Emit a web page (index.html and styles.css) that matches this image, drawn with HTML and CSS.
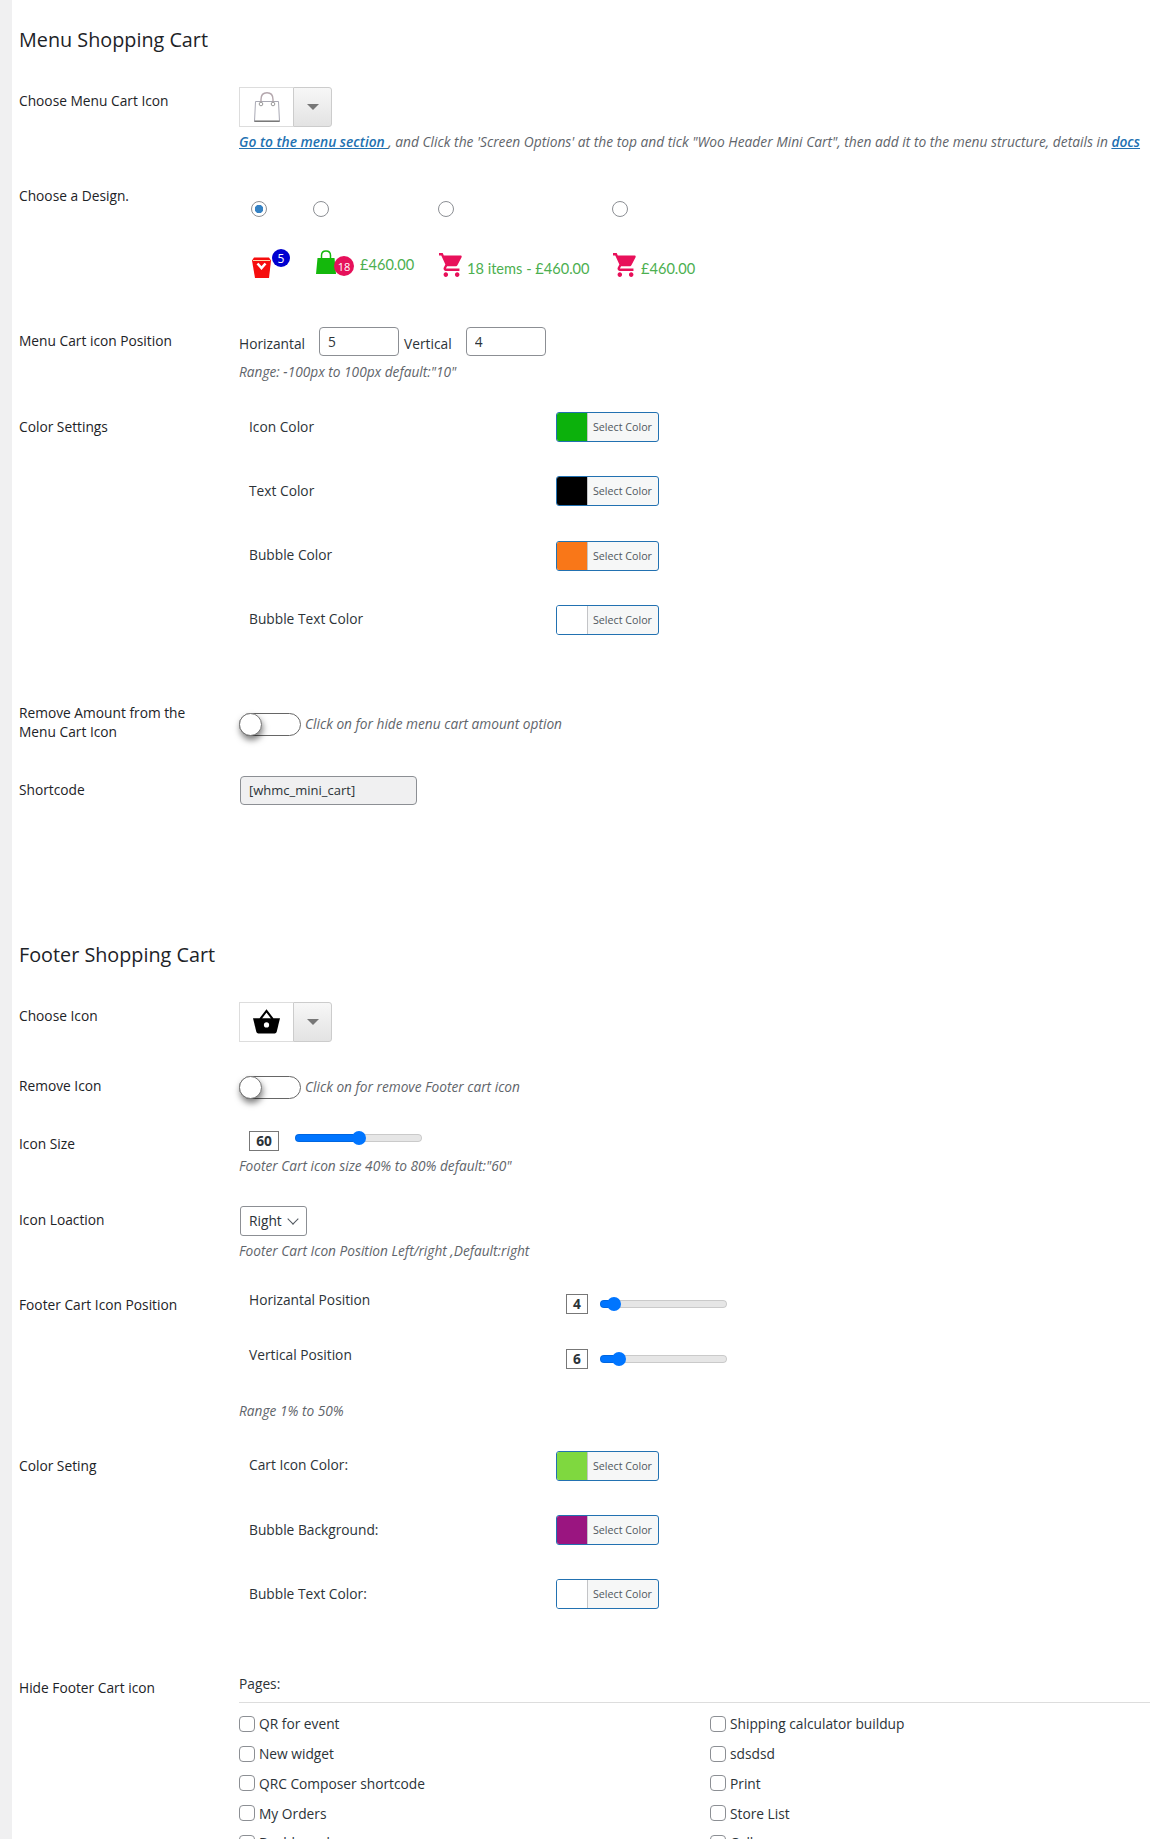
FILE: index.html
```html
<!DOCTYPE html>
<html lang="en">
<head>
  <meta charset="UTF-8">
  <meta name="viewport" content="width=device-width, initial-scale=1.0">
  <title>Mini Cart Settings</title>
  <link rel="stylesheet" href="styles.css">
</head>
<body>
<main class="settings">

  <!-- Menu cart -->
  <h2 class="section-title">Menu Shopping Cart</h2>

  <div class="row row-picker">
    <div class="label pad-4">Choose Menu Cart Icon</div>
    <div>
      <div class="picker">
        <span class="picker-icon">
          <svg width="26" height="30" viewBox="0 0 26 30">
            <path d="M1.5 9.5h23l1 20H.5z" fill="#fff" stroke="#a9a9b4"/>
            <path d="M.5 29.2h25" stroke="#777" stroke-width="1.5"/>
            <path d="M7 12V7.5C7 3.2 9.5 .8 13 .8s6 2.4 6 6.7V12" fill="none" stroke="#b4a7ad" stroke-width="1.4"/>
            <circle cx="7" cy="12" r="1.8" fill="#fff" stroke="#999"/>
            <circle cx="19" cy="12" r="1.8" fill="#fff" stroke="#999"/>
          </svg>
        </span>
        <button class="picker-btn" type="button"><span class="caret"></span></button>
      </div>
      <p class="note note-link"><a href="#">Go to the menu section </a>, and Click the 'Screen Options' at the top and tick "Woo Header Mini Cart", then add it to the menu structure, details in <a href="#">docs</a></p>
    </div>
  </div>

  <div class="row row-design">
    <div class="label">Choose a Design.</div>
    <div class="designs">
      <label class="design design-1">
        <input type="radio" name="design" checked>
        <span class="preview">
          <svg width="20" height="22" viewBox="0 0 20 22">
            <path d="M0 4.5 2 1.5h15l2 3-2 17.5H3z" fill="#f60d0d"/>
            <path d="M1 4.5h17" stroke="#ffd6a8" stroke-width="1"/>
            <path d="M5.5 7.5 9.5 12l4-4.500" fill="none" stroke="#fff" stroke-width="2.6"/>
          </svg>
          <span class="bubble bubble-blue">5</span>
        </span>
      </label>
      <label class="design design-2">
        <input type="radio" name="design">
        <span class="preview preview-bag">
          <svg width="20" height="24" viewBox="0 0 20 24">
            <path d="M1.500 8h17l1.500 16H0z" fill="#14b80c"/>
            <path d="M5.500 10V5.500C5.500 2.500 7.500 1 10 1s4.500 1.500 4.500 4.500V10" fill="none" stroke="#14b80c" stroke-width="1.500"/>
          </svg>
          <span class="bubble bubble-pink">18</span>
          <span class="price">£460.00</span>
        </span>
      </label>
      <label class="design design-3">
        <input type="radio" name="design">
        <span class="preview preview-cart">
          <svg width="25" height="24" viewBox="1 2 22 20" preserveAspectRatio="none"><path fill="#e8105a" d="M7 18c-1.100 0-1.990.9-1.990 2S5.900 22 7 22s2-.9 2-2-.9-2-2-2zM1 2v2h2l3.600 7.590-1.350 2.450c-.16.28-.25.61-.25.96 0 1.100.9 2 2 2h12v-2H7.420c-.14 0-.25-.11-.25-.25l.03-.12.9-1.630h7.450c.75 0 1.410-.41 1.750-1.030l3.580-6.490c.08-.14.12-.31.12-.48 0-.55-.45-1-1-1H5.210l-.94-2H1zm16 16c-1.100 0-1.990.9-1.990 2s.89 2 1.990 2 2-.9 2-2-.9-2-2-2z"/></svg>
          <span class="price">18 items - £460.00</span>
        </span>
      </label>
      <label class="design">
        <input type="radio" name="design">
        <span class="preview preview-cart">
          <svg width="25" height="24" viewBox="1 2 22 20" preserveAspectRatio="none"><path fill="#e8105a" d="M7 18c-1.100 0-1.990.9-1.990 2S5.900 22 7 22s2-.9 2-2-.9-2-2-2zM1 2v2h2l3.600 7.590-1.350 2.450c-.16.28-.25.61-.25.96 0 1.100.9 2 2 2h12v-2H7.420c-.14 0-.25-.11-.25-.25l.03-.12.9-1.630h7.450c.75 0 1.410-.41 1.750-1.030l3.580-6.490c.08-.14.12-.31.12-.48 0-.55-.45-1-1-1H5.210l-.94-2H1zm16 16c-1.100 0-1.990.9-1.990 2s.89 2 1.990 2 2-.9 2-2-.9-2-2-2z"/></svg>
          <span class="price">£460.00</span>
        </span>
      </label>
    </div>
  </div>

  <div class="row row-position">
    <div class="label pad-4">Menu Cart icon Position</div>
    <div>
      <div class="position-fields">
        <label class="field-text" for="posH">Horizantal</label>
        <input class="text-input" id="posH" type="text" value="5">
        <label class="field-text" for="posV">Vertical</label>
        <input class="text-input" id="posV" type="text" value="4">
      </div>
      <p class="note">Range: -100px to 100px default:"10"</p>
    </div>
  </div>

  <div class="row row-colors">
    <div class="label pad-5">Color Settings</div>
    <div class="color-list">
      <div class="color-row"><span>Icon Color</span><button class="color-btn" type="button"><span class="swatch swatch-green"></span><span class="color-text">Select Color</span></button></div>
      <div class="color-row"><span>Text Color</span><button class="color-btn" type="button"><span class="swatch swatch-black"></span><span class="color-text">Select Color</span></button></div>
      <div class="color-row"><span>Bubble Color</span><button class="color-btn" type="button"><span class="swatch swatch-orange"></span><span class="color-text">Select Color</span></button></div>
      <div class="color-row"><span>Bubble Text Color</span><button class="color-btn" type="button"><span class="swatch"></span><span class="color-text">Select Color</span></button></div>
    </div>
  </div>

  <div class="row row-amount">
    <div class="label">Remove Amount from the Menu Cart Icon</div>
    <div class="toggle-line toggle-offset">
      <span class="toggle"></span>
      <span class="note-inline">Click on for hide menu cart amount option</span>
    </div>
  </div>

  <div class="row row-shortcode">
    <div class="label pad-4">Shortcode</div>
    <div><input class="shortcode" type="text" value="[whmc_mini_cart]" readonly></div>
  </div>

  <!-- Footer cart -->
  <h2 class="section-title footer-title">Footer Shopping Cart</h2>

  <div class="row row-footer-icon">
    <div class="label pad-4">Choose Icon</div>
    <div>
      <div class="picker">
        <span class="picker-icon">
          <svg width="27" height="25" viewBox="0 0 28 25">
            <path d="M7.500 10 14 1.500 20.500 10" fill="none" stroke="#000" stroke-width="2.200"/>
            <path d="M0 9h28l-3.500 14.500q-.4 1.500-2 1.500h-17q-1.600 0-2-1.500z"/>
            <circle cx="14" cy="16" r="2.700" fill="#fff"/>
          </svg>
        </span>
        <button class="picker-btn" type="button"><span class="caret"></span></button>
      </div>
    </div>
  </div>

  <div class="row row-remove">
    <div class="label">Remove Icon</div>
    <div class="toggle-line">
      <span class="toggle"></span>
      <span class="note-inline">Click on for remove Footer cart icon</span>
    </div>
  </div>

  <div class="row row-size">
    <div class="label pad-3">Icon Size</div>
    <div>
      <div class="slider-line size-line">
        <span class="value-box value-wide">60</span>
        <input class="slider" type="range" min="40" max="80" value="60" style="--fill: 63px">
      </div>
      <p class="note note-5">Footer Cart icon size 40% to 80% default:"60"</p>
    </div>
  </div>

  <div class="row row-location">
    <div class="label pad-4">Icon Loaction</div>
    <div>
      <span class="select-wrap">
        <select class="select">
          <option>Right</option>
          <option>Left</option>
        </select>
      </span>
      <p class="note note-5">Footer Cart Icon Position Left/right ,Default:right</p>
    </div>
  </div>

  <div class="row row-footer-pos">
    <div class="label pad-5">Footer Cart Icon Position</div>
    <div>
      <div class="pos-row">
        <span>Horizantal Position</span>
        <div class="slider-line">
          <span class="value-box">4</span>
          <input class="slider" type="range" min="1" max="50" value="4" style="--fill: 14px">
        </div>
      </div>
      <div class="pos-row">
        <span>Vertical Position</span>
        <div class="slider-line">
          <span class="value-box">6</span>
          <input class="slider" type="range" min="1" max="50" value="6" style="--fill: 18px">
        </div>
      </div>
      <p class="note note-tight">Range 1% to 50%</p>
    </div>
  </div>

  <div class="row row-colors">
    <div class="label pad-5">Color Seting</div>
    <div class="color-list">
      <div class="color-row"><span>Cart Icon Color:</span><button class="color-btn" type="button"><span class="swatch swatch-lime"></span><span class="color-text">Select Color</span></button></div>
      <div class="color-row"><span>Bubble Background:</span><button class="color-btn" type="button"><span class="swatch swatch-purple"></span><span class="color-text">Select Color</span></button></div>
      <div class="color-row"><span>Bubble Text Color:</span><button class="color-btn" type="button"><span class="swatch"></span><span class="color-text">Select Color</span></button></div>
    </div>
  </div>

  <div class="row row-hide">
    <div class="label pad-4">Hide Footer Cart icon</div>
    <div>
      <div class="pages-title">Pages:</div>
      <div class="pages">
        <label class="check"><input type="checkbox">QR for event</label>
        <label class="check"><input type="checkbox">Shipping calculator buildup</label>
        <label class="check"><input type="checkbox">New widget</label>
        <label class="check"><input type="checkbox">sdsdsd</label>
        <label class="check"><input type="checkbox">QRC Composer shortcode</label>
        <label class="check"><input type="checkbox">Print</label>
        <label class="check"><input type="checkbox">My Orders</label>
        <label class="check"><input type="checkbox">Store List</label>
        <label class="check"><input type="checkbox">Dashboard</label>
        <label class="check"><input type="checkbox">Cell</label>
      </div>
    </div>
  </div>

</main>
</body>
</html>
```
FILE: styles.css
```css
html, body {
  margin: 0;
  height: 1839px;
  overflow: hidden;
}

body {
  background-color: #f0f0f1;
  color: #2c3338;
  font-family: "Open Sans", "Noto Sans", Arial, sans-serif;
  font-size: 13.75px;
  line-height: 19px;
}

.settings {
  margin-left: 12px;
  padding: 27px 0 0 7px;
  height: 1839px;
  box-sizing: border-box;
  background-color: #fff;
  overflow: hidden;
}

.section-title {
  margin: 0 0 34px;
  font-size: 19.8px;
  line-height: 26px;
  font-weight: 500;
  color: #1d2327;
}

.footer-title {
  margin-top: 137px;
  margin-bottom: 34px;
}

.row {
  display: grid;
  grid-template-columns: 220px 1fr;
}

.label {
  color: #1d2327;
  width: 175px;
}

.pad-3 { padding-top: 3px; }
.pad-4 { padding-top: 4px; }
.pad-5 { padding-top: 5px; }

.row-design { margin-top: 35px; }
.row-position { margin-top: 49px; }
.row-colors { margin-top: 31px; }
.row-amount { margin-top: 68px; }
.row-shortcode { margin-top: 35px; }
.row-remove { margin-top: 34px; }
.row-size { margin-top: 32px; }
.row-location { margin-top: 31px; }
.row-footer-pos { margin-top: 30px; }
.row-hide { margin-top: 65px; }

/* icon picker */
.picker {
  display: flex;
  width: 93px;
  height: 40px;
}

.picker-icon {
  display: flex;
  align-items: center;
  justify-content: center;
  width: 54px;
  box-sizing: border-box;
  border: 1px solid #ddd;
  border-right: none;
  background-color: #fff;
}

.picker-btn {
  display: flex;
  align-items: center;
  justify-content: center;
  width: 39px;
  padding: 0;
  border: 1px solid #ccc;
  border-radius: 0 3px 3px 0;
  background: linear-gradient(#f7f7f7, #e3e3e3);
}

.caret {
  width: 0;
  height: 0;
  border-left: 6px solid transparent;
  border-right: 6px solid transparent;
  border-top: 6px solid #777;
}

.note {
  margin: 6px 0 0;
  color: #5f656b;
  font-size: 13.7px;
  font-style: italic;
}

.note-link {
  margin-top: 5px;
  font-size: 13.77px;
}

.note-5 { margin-top: 5px; }
.note-tight { margin-top: 1px; }

.note a {
  color: #2271b1;
  font-weight: 600;
}

.note-inline {
  padding-bottom: 1px;
  color: #5f656b;
  font-size: 13.7px;
  font-style: italic;
}

/* designs */
.designs {
  display: flex;
  padding: 15px 0 0 12px;
}

.design {
  display: block;
}

.design-1 { width: 62px; }
.design-2 { width: 125px; }
.design-3 { width: 174px; }

input[type="radio"] {
  display: block;
  appearance: none;
  width: 16px;
  height: 16px;
  margin: 0;
  border: 1px solid #8c8f94;
  border-radius: 50%;
  background-color: #fff;
}

input[type="radio"]:checked {
  background: radial-gradient(circle, #3582c4 0 4px, #fff 4.500px);
}

.preview {
  position: relative;
  display: flex;
  height: 28px;
  margin-top: 33px;
  padding-left: 1px;
}

.preview svg {
  display: block;
  align-self: flex-end;
}

.preview-bag {
  padding-left: 3px;
  gap: 24px;
}

.preview-bag svg {
  align-self: flex-start;
}

.preview-cart {
  gap: 3px;
}

.preview-cart svg {
  align-self: flex-start;
  margin-top: 3px;
}

.bubble {
  position: absolute;
  display: flex;
  align-items: center;
  justify-content: center;
  border-radius: 50%;
  color: #fff;
}

.bubble-blue {
  left: 21px;
  top: -1px;
  width: 18px;
  height: 18px;
  font-size: 12px;
  background-color: #0000d0;
}

.bubble-pink {
  left: 21px;
  top: 6px;
  width: 20px;
  height: 20px;
  font-size: 11px;
  background-color: #e6105a;
}

.price {
  font-family: Lato, "Open Sans", sans-serif;
  font-size: 14.6px;
  line-height: 28px;
  color: #4caf50;
  white-space: nowrap;
}

.preview-bag .price { line-height: 30px; }
.preview-cart .price { line-height: 38px; }

/* position inputs */
.position-fields {
  display: flex;
  align-items: center;
  height: 29px;
}

.field-text {
  padding-top: 4px;
}

.text-input {
  box-sizing: border-box;
  width: 80px;
  height: 29px;
  margin: 0 5px 0 14px;
  padding: 0 8px;
  border: 1px solid #8c8f94;
  border-radius: 4px;
  color: #2c3338;
  font: inherit;
  background-color: #fff;
}

/* colors */
.color-list {
  display: flex;
  flex-direction: column;
  gap: 34.300px;
}

.color-row {
  display: grid;
  grid-template-columns: 307px auto;
  justify-content: start;
  align-items: center;
  padding-left: 10px;
}

.color-row > span {
  padding-bottom: 2px;
}

.color-btn {
  display: flex;
  width: 103px;
  height: 30px;
  padding: 0;
  border: 1px solid #2271b1;
  border-radius: 3px;
  overflow: hidden;
  font-family: inherit;
  background-color: #f6f7f7;
}

.swatch {
  width: 30px;
  height: 100%;
  border-right: 1px solid #c3c4c7;
  background-color: #fff;
}

.swatch-green { background-color: #0cb10c; }
.swatch-black { background-color: #000; }
.swatch-orange { background-color: #f97718; }
.swatch-lime { background-color: #7fd83f; }
.swatch-purple { background-color: #9a1580; }

.color-text {
  padding-left: 5px;
  color: #50575e;
  font-size: 10.7px;
  line-height: 28px;
}

/* toggle */
.toggle-line {
  display: flex;
  align-items: center;
  gap: 4px;
  height: 23px;
}

.toggle-offset { margin-top: 10px; }

.toggle {
  position: relative;
  display: block;
  width: 62px;
  height: 23px;
  box-sizing: border-box;
  border: 1px solid #666;
  border-radius: 12px;
  background-color: #fff;
}

.toggle::before {
  content: "";
  position: absolute;
  left: -1px;
  top: -1px;
  width: 23px;
  height: 23px;
  box-sizing: border-box;
  border: 1px solid #777;
  border-radius: 50%;
  background-color: #fff;
  box-shadow: 1px 4px 6px rgba(0, 0, 0, 0.5);
}

.shortcode {
  display: block;
  box-sizing: border-box;
  width: 177px;
  height: 29px;
  margin-left: 1px;
  padding: 0 8px;
  border: 1px solid #8c8f94;
  border-radius: 4px;
  color: #2c3338;
  font: inherit;
  font-size: 13px;
  background-color: #f0f0f1;
}

/* sliders */
.slider-line {
  display: flex;
  align-items: flex-start;
  gap: 12px;
}

.size-line {
  gap: 16px;
  padding-left: 10px;
}

.value-box {
  display: block;
  box-sizing: border-box;
  width: 22px;
  height: 20px;
  border: 1px solid #777;
  color: #2c3338;
  font-weight: 700;
  line-height: 18px;
  text-align: center;
}

.value-wide { width: 30px; }

.slider {
  display: block;
  appearance: none;
  width: 127px;
  height: 14px;
  margin: 0;
  background: transparent;
}

.slider::-webkit-slider-runnable-track {
  box-sizing: border-box;
  height: 8px;
  border-radius: 4px;
  background: linear-gradient(#0075ff, #0075ff) no-repeat 0 0 / var(--fill) 100%, #e6e6e6;
  box-shadow: inset 0 0 0 1px rgba(0, 0, 0, 0.12);
}

.slider::-webkit-slider-thumb {
  appearance: none;
  width: 14px;
  height: 14px;
  margin-top: -3px;
  border-radius: 50%;
  background-color: #0075ff;
}

.pos-row {
  display: grid;
  grid-template-columns: 317px auto;
  justify-content: start;
  height: 55px;
  padding-left: 10px;
}

.pos-row .value-box { margin-top: 4px; }
.pos-row .slider { margin-top: 7px; }

.select-wrap {
  position: relative;
  display: block;
  width: 67px;
  margin-left: 1px;
}

.select-wrap::after {
  content: "";
  position: absolute;
  right: 10px;
  top: 9px;
  width: 7px;
  height: 7px;
  border-right: 1.500px solid #50575e;
  border-bottom: 1.500px solid #50575e;
  transform: rotate(45deg);
  pointer-events: none;
}

.select {
  display: block;
  appearance: none;
  box-sizing: border-box;
  width: 67px;
  height: 30px;
  padding: 0 0 0 8px;
  border: 1px solid #8c8f94;
  border-radius: 3px;
  color: #2c3338;
  font: inherit;
  background-color: #fff;
}

/* pages */
.pages-title {
  padding-bottom: 9px;
  border-bottom: 1px solid #ddd;
}

.pages {
  display: grid;
  grid-template-columns: 471px 1fr;
  row-gap: 10.700px;
  margin-top: 11px;
}

.check {
  display: flex;
  align-items: center;
  gap: 4px;
}

input[type="checkbox"] {
  appearance: none;
  width: 16px;
  height: 16px;
  margin: 0;
  border: 1px solid #8c8f94;
  border-radius: 4px;
  background-color: #fff;
}
```
